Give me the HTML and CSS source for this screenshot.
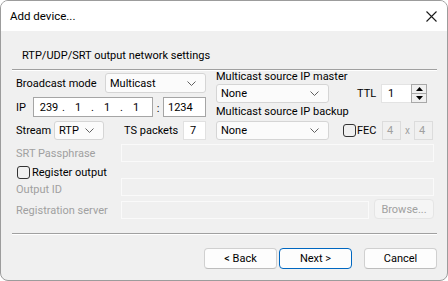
FILE: index.html
```html
<!DOCTYPE html>
<html>
<head>
<meta charset="utf-8">
<link rel="stylesheet" href="styles.css">
</head>
<body>
<div class="win">
  <div class="titlebar">
    <span class="title">Add device...</span>
    <svg class="close" width="11" height="11" viewBox="0 0 11 11"><path d="M0.5 0.5L10.5 10.5M10.5 0.5L0.5 10.5" stroke="#1a1a1a" stroke-width="1.1" fill="none"/></svg>
  </div>
  <div class="body">
    <div class="section">RTP/UDP/SRT output network settings</div>
    <div class="top">
      <div class="left">
        <div class="row row-a">
          <span class="lbl lbl-mode">Broadcast mode</span>
          <div class="combo combo-mode"><span>Multicast</span><svg class="chev" width="9" height="5" viewBox="0 0 9 5"><polyline points="0.5,0.5 4.5,4.5 8.5,0.5" fill="none" stroke="#606060"/></svg></div>
        </div>
        <div class="row row-a">
          <span class="lbl lbl-ip">IP</span>
          <div class="edit ipbox"><span class="seg">239</span><span class="dot">.</span><span class="seg">1</span><span class="dot">.</span><span class="seg">1</span><span class="dot">.</span><span class="seg">1</span></div>
          <span class="colon">:</span>
          <div class="edit port">1234</div>
        </div>
        <div class="row row-b">
          <span class="lbl lbl-stream">Stream</span>
          <div class="combo combo-stream"><span>RTP</span><svg class="chev" width="9" height="5" viewBox="0 0 9 5"><polyline points="0.5,0.5 4.5,4.5 8.5,0.5" fill="none" stroke="#606060"/></svg></div>
          <span class="lbl lbl-ts">TS packets</span>
          <div class="edit tsbox">7</div>
        </div>
      </div>
      <div class="right">
        <div class="rlabel">Multicast source IP master</div>
        <div class="rrow">
          <div class="combo combo-src"><span>None</span><svg class="chev" width="9" height="5" viewBox="0 0 9 5"><polyline points="0.5,0.5 4.5,4.5 8.5,0.5" fill="none" stroke="#606060"/></svg></div>
          <span class="lbl lbl-ttl">TTL</span>
          <div class="spin">
            <div class="spin-val">1</div>
            <div class="spin-btns">
              <div class="spin-btn"><svg width="7" height="4" viewBox="0 0 7 4"><polygon points="3.5,0 7,4 0,4" fill="#000"/></svg></div>
              <div class="spin-btn"><svg width="7" height="4" viewBox="0 0 7 4"><polygon points="0,0 7,0 3.5,4" fill="#000"/></svg></div>
            </div>
          </div>
        </div>
        <div class="rlabel rlabel-2">Multicast source IP backup</div>
        <div class="rrow">
          <div class="combo combo-src"><span>None</span><svg class="chev" width="9" height="5" viewBox="0 0 9 5"><polyline points="0.5,0.5 4.5,4.5 8.5,0.5" fill="none" stroke="#606060"/></svg></div>
          <span class="check check-fec"></span>
          <span class="lbl lbl-fec">FEC</span>
          <div class="fecbox">4</div>
          <span class="times">x</span>
          <div class="fecbox">4</div>
        </div>
      </div>
    </div>
    <div class="field field-srt">
      <span class="lbl dis flbl">SRT Passphrase</span>
      <div class="dbox"></div>
    </div>
    <div class="reg">
      <span class="check"></span>
      <span class="lbl">Register output</span>
    </div>
    <div class="field">
      <span class="lbl dis flbl flbl-low">Output ID</span>
      <div class="dbox"></div>
    </div>
    <div class="field field-server">
      <span class="lbl dis flbl">Registration server</span>
      <div class="dbox"></div>
      <div class="btn btn-dis">Browse...</div>
    </div>
    <div class="sep"></div>
    <div class="buttons">
      <div class="btn btn-main">&lt; Back</div>
      <div class="btn btn-main btn-default">Next &gt;</div>
      <div class="btn btn-main btn-cancel">Cancel</div>
    </div>
  </div>
</div>
</body>
</html>
```

FILE: styles.css
```css
* { box-sizing: border-box; margin: 0; padding: 0; }
html, body { width: 448px; height: 281px; overflow: hidden; }
body {
  margin: 0;
  background: #ffffff;
  font-family: Roboto, "Liberation Sans", sans-serif;
  font-size: 11px;
  color: #000;
}
.win {
  width: 448px;
  height: 281px;
  border: 1px solid #9c9c9c;
  border-radius: 8px;
  overflow: hidden;
  background: #f0f0f0;
  display: flex;
  flex-direction: column;
}
.titlebar {
  height: 30px;
  flex: none;
  background: #ffffff;
  display: flex;
  align-items: center;
  justify-content: space-between;
  padding: 0 10px 0 9px;
}
.title { font-size: 11.5px; line-height: 16px; }
.close { display: block; }
.body {
  flex: 1;
  padding: 0 10px 0 11px;
  display: flex;
  flex-direction: column;
}
.section {
  padding: 17px 0 5px 10px;
  line-height: 16px;
  border-bottom: 1px solid #a0a0a0;
  box-shadow: 0 1px 0 #ffffff;
}
.top {
  display: flex;
  padding-left: 4px;
  gap: 10px;
}
.left {
  width: 190px;
  padding-top: 3px;
  display: flex;
  flex-direction: column;
  gap: 4px;
}
.row { display: flex; align-items: center; }
.row-a { height: 20px; }
.row-b { height: 19px; }
.lbl { white-space: nowrap; line-height: 15px; }
.lbl-mode { width: 89px; }
.lbl-ip { width: 17px; }
.lbl-stream { width: 38px; }
.lbl-ts { width: 59px; margin-left: 20px; }
.combo {
  height: 100%;
  background: #fbfbfb;
  border: 1px solid #d5d5d5;
  border-radius: 3px;
  display: flex;
  align-items: center;
  justify-content: space-between;
  padding: 0 9px 0 4px;
}
.chev { display: block; }
.combo-mode { width: 101px; }
.combo-stream { width: 50px; }
.combo-src { width: 113px; }
.edit {
  height: 100%;
  background: #ffffff;
  border: 1px solid #a5a5a5;
  display: flex;
  align-items: center;
}
.ipbox { width: 120px; padding-left: 4px; }
.seg { width: 22px; text-align: center; }
.dot { width: 7px; text-align: center; }
.colon { width: 10px; text-align: center; align-self: flex-end; line-height: 16px; }
.port { width: 43px; padding-left: 4px; }
.tsbox { width: 23px; padding-left: 6px; border-color: #e1e1e1; }
.right {
  width: 217px;
  display: flex;
  flex-direction: column;
}
.rlabel { height: 14px; line-height: 14px; white-space: nowrap; }
.rlabel-2 { height: 18px; line-height: 18px; }
.rrow { height: 19px; display: flex; align-items: center; }
.lbl-ttl { width: 24px; margin-left: 28px; }
.spin {
  width: 46px;
  height: 100%;
  display: flex;
  background: #ffffff;
  border: 1px solid #e3e3e3;
}
.spin-val { flex: 1; padding-left: 6px; display: flex; align-items: center; }
.spin-btns {
  width: 16px;
  display: flex;
  flex-direction: column;
  border: 1px solid #a8a8a8;
  margin: -1px -1px -1px 0;
}
.spin-btn {
  flex: 1;
  display: flex;
  align-items: center;
  justify-content: center;
  background: #f0f0f0;
}
.spin-btn + .spin-btn { border-top: 1px solid #a8a8a8; }
.spin-btn svg { display: block; }
.check {
  width: 13px;
  height: 13px;
  border: 1px solid #333333;
  border-radius: 3px;
  flex: none;
}
.check-fec { margin-left: 14px; }
.lbl-fec { width: 25px; margin-left: 1px; }
.fecbox {
  width: 19px;
  height: 100%;
  border: 1px solid #dcdcdc;
  color: #a0a0a0;
  padding-left: 4px;
  display: flex;
  align-items: center;
}
.times { width: 13px; text-align: center; color: #a0a0a0; font-size: 10px; }
.field {
  display: flex;
  align-items: center;
  height: 18px;
  padding-left: 4px;
  margin-right: 3px;
}
.field-srt { margin-top: 4px; }
.flbl { width: 105px; }
.flbl-low { margin-top: 4px; }
.dis { color: #a0a0a0; }
.dbox {
  flex: 1;
  height: 18px;
  border: 1px solid #fafafa;
  background: #f0f0f0;
}
.reg {
  height: 16px;
  display: flex;
  align-items: center;
  padding: 4px 0 0 5px;
  gap: 2px;
}
.field-server {
  height: 20px;
  margin-top: 3px;
  align-items: flex-end;
}
.field-server .flbl { align-self: center; margin-top: 2px; }
.field-server .dbox { margin-right: 5px; }
.btn {
  height: 20px;
  display: flex;
  align-items: center;
  justify-content: center;
  border-radius: 4px;
  white-space: nowrap;
}
.btn-dis {
  width: 60px;
  background: #f5f5f5;
  border: 1px solid #e5e5e5;
  color: #a0a0a0;
}
.sep {
  margin-top: 14px;
  height: 1px;
  background: #a0a0a0;
  box-shadow: 0 1px 0 #ffffff;
  flex: none;
}
.buttons {
  margin-top: 14px;
  display: flex;
  justify-content: flex-end;
  gap: 2px;
}
.btn-main {
  width: 73px;
  height: 21px;
  background: #fdfdfd;
  border: 1px solid #d0d0d0;
  border-bottom-color: #bdbdbd;
}
.btn-default { border: 1px solid #0067c0; }
.btn-cancel { margin-left: 10px; }
```
